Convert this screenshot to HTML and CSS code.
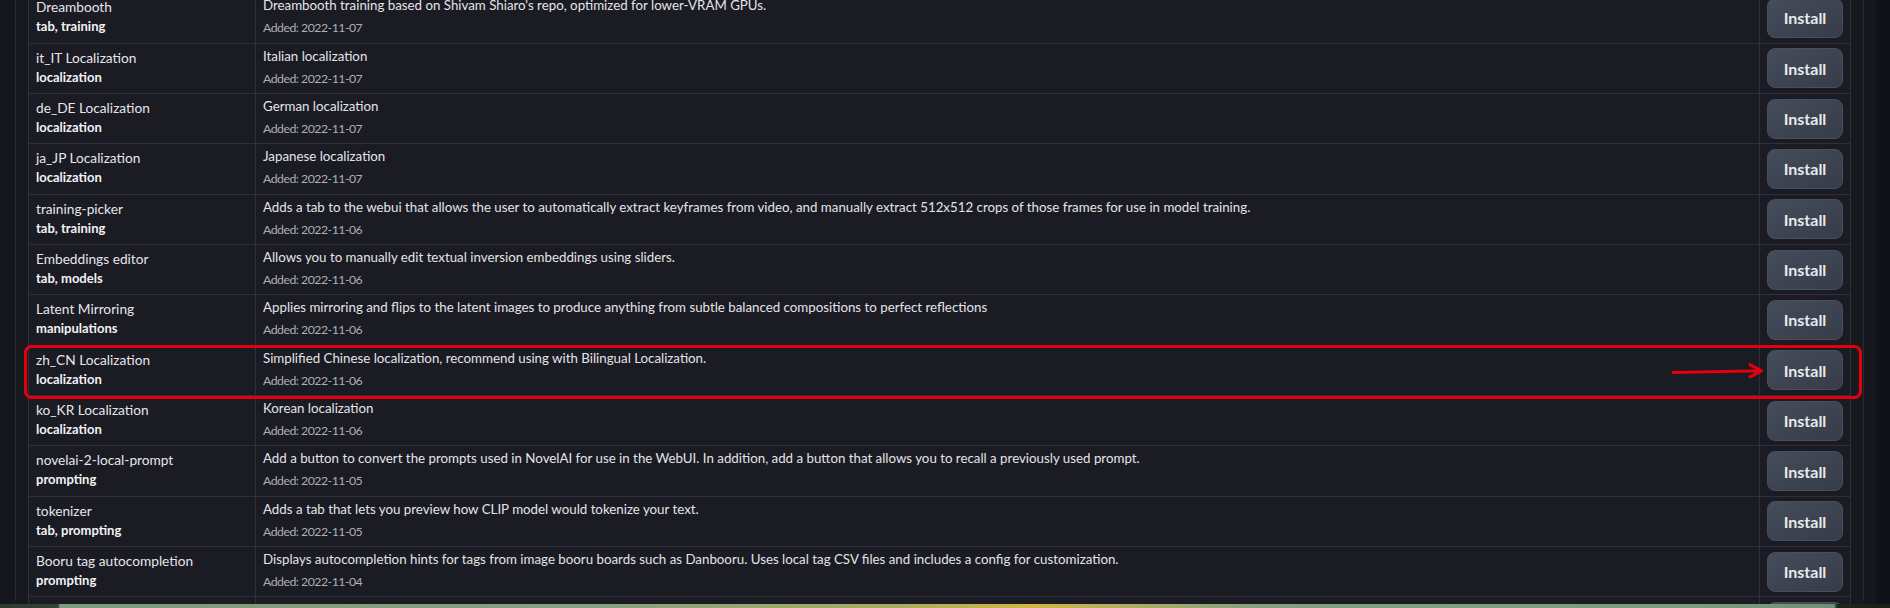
FILE: index.html
```html
<!DOCTYPE html>
<html lang="en">
<head>
<meta charset="utf-8">
<title>Extensions</title>
<link rel="stylesheet" href="styles.css">
</head>
<body>
<div class="screen">
  <div class="page">
    <div class="block">
      <div class="table">
        <div class="row">
          <div class="cell name"><div class="title">Dreambooth</div><div class="tags">tab, training</div></div>
          <div class="cell desc"><div class="text">Dreambooth training based on Shivam Shiaro's repo, optimized for lower-VRAM GPUs.</div><div class="date">Added: 2022-11-07</div></div>
          <div class="cell action"><button class="btn">Install</button></div>
        </div>
        <div class="row">
          <div class="cell name"><div class="title">it_IT Localization</div><div class="tags">localization</div></div>
          <div class="cell desc"><div class="text">Italian localization</div><div class="date">Added: 2022-11-07</div></div>
          <div class="cell action"><button class="btn">Install</button></div>
        </div>
        <div class="row">
          <div class="cell name"><div class="title">de_DE Localization</div><div class="tags">localization</div></div>
          <div class="cell desc"><div class="text">German localization</div><div class="date">Added: 2022-11-07</div></div>
          <div class="cell action"><button class="btn">Install</button></div>
        </div>
        <div class="row">
          <div class="cell name"><div class="title">ja_JP Localization</div><div class="tags">localization</div></div>
          <div class="cell desc"><div class="text">Japanese localization</div><div class="date">Added: 2022-11-07</div></div>
          <div class="cell action"><button class="btn">Install</button></div>
        </div>
        <div class="row">
          <div class="cell name"><div class="title">training-picker</div><div class="tags">tab, training</div></div>
          <div class="cell desc"><div class="text">Adds a tab to the webui that allows the user to automatically extract keyframes from video, and manually extract 512x512 crops of those frames for use in model training.</div><div class="date">Added: 2022-11-06</div></div>
          <div class="cell action"><button class="btn">Install</button></div>
        </div>
        <div class="row">
          <div class="cell name"><div class="title">Embeddings editor</div><div class="tags">tab, models</div></div>
          <div class="cell desc"><div class="text">Allows you to manually edit textual inversion embeddings using sliders.</div><div class="date">Added: 2022-11-06</div></div>
          <div class="cell action"><button class="btn">Install</button></div>
        </div>
        <div class="row">
          <div class="cell name"><div class="title">Latent Mirroring</div><div class="tags">manipulations</div></div>
          <div class="cell desc"><div class="text">Applies mirroring and flips to the latent images to produce anything from subtle balanced compositions to perfect reflections</div><div class="date">Added: 2022-11-06</div></div>
          <div class="cell action"><button class="btn">Install</button></div>
        </div>
        <div class="row">
          <div class="cell name"><div class="title">zh_CN Localization</div><div class="tags">localization</div></div>
          <div class="cell desc"><div class="text">Simplified Chinese localization, recommend using with Bilingual Localization.</div><div class="date">Added: 2022-11-06</div></div>
          <div class="cell action"><button class="btn">Install</button></div>
        </div>
        <div class="row">
          <div class="cell name"><div class="title">ko_KR Localization</div><div class="tags">localization</div></div>
          <div class="cell desc"><div class="text">Korean localization</div><div class="date">Added: 2022-11-06</div></div>
          <div class="cell action"><button class="btn">Install</button></div>
        </div>
        <div class="row">
          <div class="cell name"><div class="title">novelai-2-local-prompt</div><div class="tags">prompting</div></div>
          <div class="cell desc"><div class="text">Add a button to convert the prompts used in NovelAI for use in the WebUI. In addition, add a button that allows you to recall a previously used prompt.</div><div class="date">Added: 2022-11-05</div></div>
          <div class="cell action"><button class="btn">Install</button></div>
        </div>
        <div class="row">
          <div class="cell name"><div class="title">tokenizer</div><div class="tags">tab, prompting</div></div>
          <div class="cell desc"><div class="text">Adds a tab that lets you preview how CLIP model would tokenize your text.</div><div class="date">Added: 2022-11-05</div></div>
          <div class="cell action"><button class="btn">Install</button></div>
        </div>
        <div class="row">
          <div class="cell name"><div class="title">Booru tag autocompletion</div><div class="tags">prompting</div></div>
          <div class="cell desc"><div class="text">Displays autocompletion hints for tags from image booru boards such as Danbooru. Uses local tag CSV files and includes a config for customization.</div><div class="date">Added: 2022-11-04</div></div>
          <div class="cell action"><button class="btn">Install</button></div>
        </div>
        <div class="row">
          <div class="cell name"></div>
          <div class="cell desc"></div>
          <div class="cell action"><button class="btn" aria-label="Install"></button></div>
        </div>
      </div>
    </div>
  </div>
  <div class="scrollbar"></div>
  <svg class="annot" width="1890" height="608" viewBox="0 0 1890 608" aria-hidden="true">
    <rect x="25.5" y="346.5" width="1835" height="51" rx="6" ry="6" fill="none" stroke="#e5000c" stroke-width="3"/>
    <path d="M1673 372.4 L1761.5 370.8 M1750 364.6 L1761.5 370.8 L1750 376.8" fill="none" stroke="#e5000c" stroke-width="3" stroke-linecap="round" stroke-linejoin="round"/>
  </svg>
  <div class="taskbar"></div>
</div>
</body>
</html>
```

FILE: styles.css
```css
* { box-sizing: border-box; }
html, body {
  margin: 0;
  padding: 0;
  background: #16171e;
  overflow: hidden;
}
body {
  font-family: "Lato", "Liberation Sans", sans-serif;
  color: #e4e4e8;
}
.screen {
  position: relative;
  width: 1890px;
  height: 608px;
  display: flex;
  overflow: hidden;
}
.page {
  flex: 1;
  padding: 0 12px 0 15px;
  background: #16171e;
}
.block {
  border-left: 1px solid #2a2b36;
  border-right: 1px solid #2a2b36;
  background: #18191f;
  padding: 0 12px;
  height: 100%;
}
.table {
  margin-top: -6.86px;
  border-left: 1px solid #2f303c;
  border-right: 1px solid #2f303c;
  background: #1a1b23;
}
.row {
  display: grid;
  grid-template-columns: 227px 1504px 90px;
  height: 50.36px;
  border-bottom: 1px solid #2f303c;
}
.cell {
  padding: 4px 7px 0 7px;
  border-right: 1px solid #2f303c;
  overflow: hidden;
}
.cell.action {
  border-right: none;
  padding: 0 7px;
  display: flex;
  align-items: center;
}
.title {
  font-size: 13.7px;
  line-height: 20px;
  color: #e6e6ea;
  white-space: nowrap;
}
.tags {
  font-size: 13px;
  line-height: 19px;
  font-weight: 700;
  color: #f2f2f4;
  white-space: nowrap;
}
.text {
  font-size: 13.3px;
  line-height: 17px;
  color: #e4e4e8;
  white-space: nowrap;
}
.date {
  margin-top: 7px;
  font-size: 12.3px;
  line-height: 14px;
  letter-spacing: -0.5px;
  color: #aeafb6;
  white-space: nowrap;
}
.btn {
  width: 76px;
  height: 40px;
  border-radius: 8px;
  border: 1px solid #474e5c;
  background: linear-gradient(to bottom right, #454c5a, #363c49);
  color: #e9e9ec;
  font-family: "Lato", "Liberation Sans", sans-serif;
  font-weight: 700;
  font-size: 16px;
  padding: 0;
}
.scrollbar {
  width: 14px;
  background: #111218;
}
.annot {
  position: absolute;
  left: 0;
  top: 0;
  pointer-events: none;
}
.taskbar {
  position: absolute;
  left: 0;
  right: 0;
  bottom: 0;
  height: 4px;
  background: linear-gradient(to right, #2c3a30 0, #34443a 58px, #7f9a78 60px, #87a07f 600px, #a9ab60 900px, #d2b544 1030px, #b5ae60 1110px, #86a07e 1250px, #7c9a7c 1700px, #6f8f78 1834px, #1c2619 1837px, #1a2217 1890px);
}
```
